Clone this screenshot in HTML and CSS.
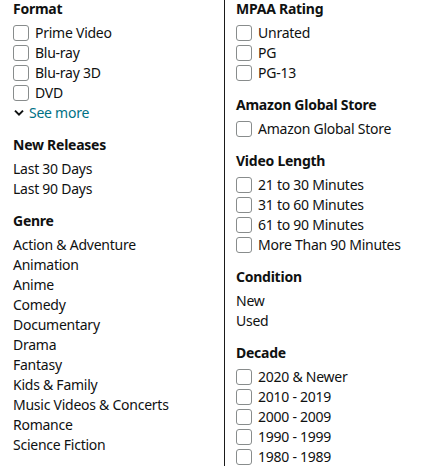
FILE: index.html
```html
<!DOCTYPE html>
<html>
<head>
<meta charset="utf-8">
<link rel="stylesheet" href="styles.css">
</head>
<body>
<div class="filters">
  <div class="col col-left">
    <section class="group">
      <h3 class="title">Format</h3>
      <ul class="list">
        <li class="check"><span class="box"></span>Prime Video</li>
        <li class="check"><span class="box"></span>Blu-ray</li>
        <li class="check"><span class="box"></span>Blu-ray 3D</li>
        <li class="check"><span class="box"></span>DVD</li>
        <li class="more"><svg class="chev" width="10" height="8" viewBox="0 0 10 8"><path d="M1 1.6 L5 5.6 L9 1.6" fill="none" stroke="#0F1111" stroke-width="2"/></svg>See more</li>
      </ul>
    </section>
    <section class="group">
      <h3 class="title">New Releases</h3>
      <ul class="list">
        <li>Last 30 Days</li>
        <li>Last 90 Days</li>
      </ul>
    </section>
    <section class="group">
      <h3 class="title">Genre</h3>
      <ul class="list">
        <li>Action &amp; Adventure</li>
        <li>Animation</li>
        <li>Anime</li>
        <li>Comedy</li>
        <li>Documentary</li>
        <li>Drama</li>
        <li>Fantasy</li>
        <li>Kids &amp; Family</li>
        <li>Music Videos &amp; Concerts</li>
        <li>Romance</li>
        <li>Science Fiction</li>
      </ul>
    </section>
  </div>
  <div class="col col-right">
    <section class="group">
      <h3 class="title">MPAA Rating</h3>
      <ul class="list">
        <li class="check"><span class="box"></span>Unrated</li>
        <li class="check"><span class="box"></span>PG</li>
        <li class="check"><span class="box"></span>PG-13</li>
      </ul>
    </section>
    <section class="group">
      <h3 class="title">Amazon Global Store</h3>
      <ul class="list">
        <li class="check"><span class="box"></span>Amazon Global Store</li>
      </ul>
    </section>
    <section class="group">
      <h3 class="title">Video Length</h3>
      <ul class="list">
        <li class="check"><span class="box"></span>21 to 30 Minutes</li>
        <li class="check"><span class="box"></span>31 to 60 Minutes</li>
        <li class="check"><span class="box"></span>61 to 90 Minutes</li>
        <li class="check"><span class="box"></span>More Than 90 Minutes</li>
      </ul>
    </section>
    <section class="group">
      <h3 class="title">Condition</h3>
      <ul class="list">
        <li>New</li>
        <li>Used</li>
      </ul>
    </section>
    <section class="group">
      <h3 class="title">Decade</h3>
      <ul class="list">
        <li class="check"><span class="box"></span>2020 &amp; Newer</li>
        <li class="check"><span class="box"></span>2010 - 2019</li>
        <li class="check"><span class="box"></span>2000 - 2009</li>
        <li class="check"><span class="box"></span>1990 - 1999</li>
        <li class="check"><span class="box"></span>1980 - 1989</li>
      </ul>
    </section>
  </div>
</div>
</body>
</html>
```

FILE: styles.css
```css
html, body {
  margin: 0;
  padding: 0;
  background: #ffffff;
}
body {
  font-family: "Noto Sans", "Open Sans", sans-serif;
  font-size: 14px;
  letter-spacing: -0.25px;
  color: #0F1111;
  width: 440px;
  height: 466px;
  overflow: hidden;
}
.filters {
  display: grid;
  grid-template-columns: 224px 1fr;
  height: 466px;
}
.col-left {
  padding-left: 13px;
}
.col-right {
  border-left: 1px solid #1a1a1a;
  padding-left: 11px;
}
.group {
  margin-bottom: 13px;
}
.title {
  margin: 0 0 5px 0;
  font-size: 14px;
  font-weight: 700;
  line-height: 18px;
}
.list {
  list-style: none;
  margin: 0;
  padding: 0;
}
.list li {
  line-height: 20px;
  height: 20px;
  white-space: nowrap;
}
.check {
  display: flex;
  align-items: center;
}
.box {
  width: 14px;
  height: 14px;
  border: 1px solid #888C8C;
  border-radius: 3px;
  margin-right: 6px;
  box-sizing: content-box;
  flex: none;
}
.more {
  display: flex;
  align-items: center;
  color: #007185;
}
.chev {
  margin: 0 5px 0 1px;
}
```
